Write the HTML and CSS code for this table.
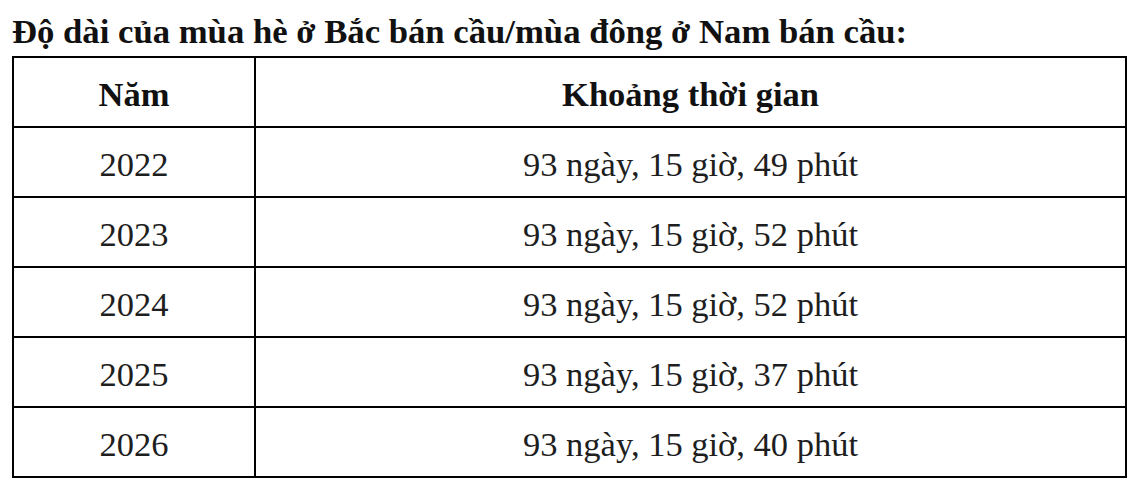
FILE: index.html
```html
<!DOCTYPE html>
<html lang="vi">
<head>
<meta charset="utf-8">
<link rel="stylesheet" href="styles.css">
</head>
<body>
<h1 class="title">Độ dài của mùa hè ở Bắc bán cầu/mùa đông ở Nam bán cầu:</h1>
<table class="data">
  <thead>
    <tr><th class="col-year">Năm</th><th>Khoảng thời gian</th></tr>
  </thead>
  <tbody>
    <tr><td>2022</td><td>93 ngày, 15 giờ, 49 phút</td></tr>
    <tr><td>2023</td><td>93 ngày, 15 giờ, 52 phút</td></tr>
    <tr><td>2024</td><td>93 ngày, 15 giờ, 52 phút</td></tr>
    <tr><td>2025</td><td>93 ngày, 15 giờ, 37 phút</td></tr>
    <tr><td>2026</td><td>93 ngày, 15 giờ, 40 phút</td></tr>
  </tbody>
</table>
</body>
</html>
```
FILE: styles.css
```css
html, body {
  margin: 0;
  padding: 0;
  background: #fff;
}
body {
  font-family: "Liberation Serif", "Times New Roman", serif;
  color: #1e1e1e;
  padding: 12px 15px 0 12px;
}
.title {
  margin: 0 0 4px 0;
  font-size: 34.7px;
  line-height: 40px;
  font-weight: bold;
  color: #111;
}
.data {
  width: 1115px;
  border-collapse: collapse;
  border: 2px solid #000;
}
.data th, .data td {
  border: 2px solid #000;
  padding: 3px 0 0 0;
  box-sizing: border-box;
  height: 70px;
  text-align: center;
  font-size: 34.5px;
  line-height: 40px;
}
.data th {
  font-weight: bold;
  color: #111;
}
.data .col-year {
  width: 242px;
}
```
